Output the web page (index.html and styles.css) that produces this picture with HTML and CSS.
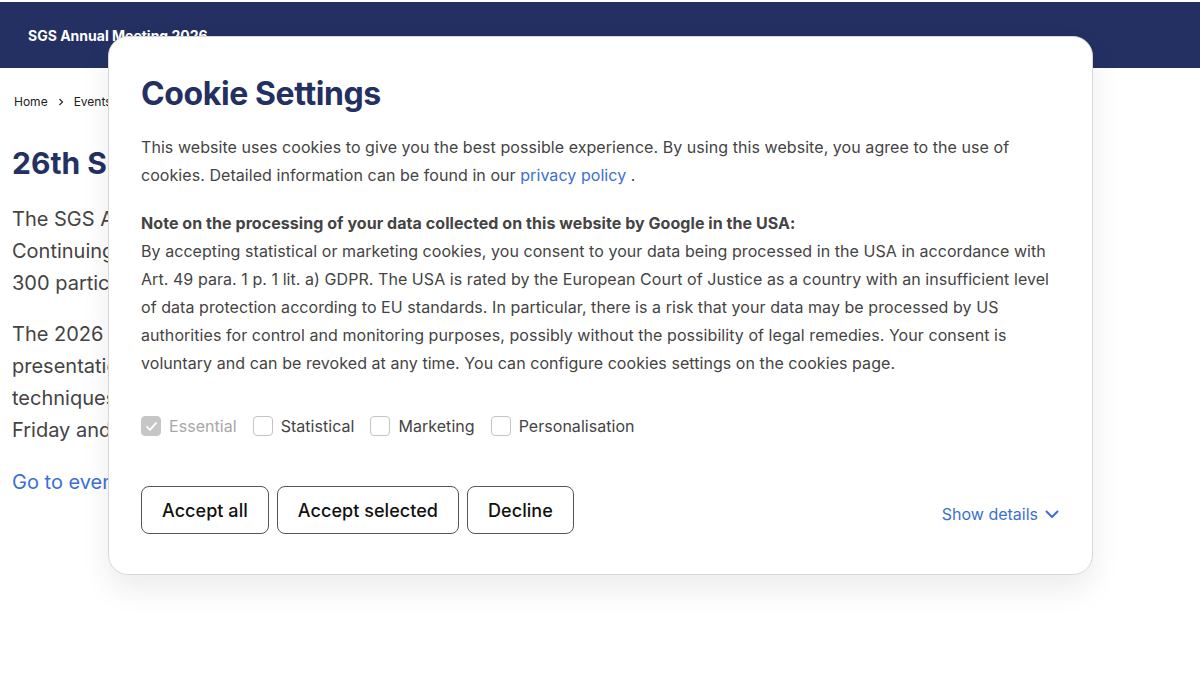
FILE: index.html
```html
<!DOCTYPE html>
<html lang="en">
<head>
    <meta charset="UTF-8">
    <meta name="viewport" content="width=device-width, initial-scale=1.0">
    <title>SGS Annual Meeting 2026</title>
    <link rel="stylesheet" href="styles.css">
</head>
<body>
    <header class="site-header">
        <a class="site-title" href="#">SGS Annual Meeting 2026</a>
    </header>

    <nav class="breadcrumb">
        <a href="#">Home</a>
        <svg class="crumb-sep" viewBox="0 0 8 8" width="8" height="8"><path d="M2.5 1l3 3-3 3" fill="none" stroke="#222" stroke-width="1.1"/></svg>
        <a href="#">Events</a>
        <svg class="crumb-sep" viewBox="0 0 8 8" width="8" height="8"><path d="M2.5 1l3 3-3 3" fill="none" stroke="#222" stroke-width="1.1"/></svg>
        <span>26th SGS Annual Meeting</span>
    </nav>

    <main class="page-content">
        <h1>26th SGS Annual Meeting</h1>
        <p>The SGS Annual Meeting is the central meeting of the society and brings together members,<br>
            Continuing education candidates and guests from all regions. Every year more than<br>
            300 participants take part in the scientific programme.</p>
        <p>The 2026 meeting offers a broad programme of keynote lectures, short<br>
            presentations, workshops and poster sessions on current methods and<br>
            techniques. The meeting takes place over two days,<br>
            Friday and Saturday, at the congress centre.</p>
        <a class="event-link" href="#">Go to event registration</a>
    </main>

    <div class="cookie-modal" role="dialog" aria-labelledby="cookieTitle">
        <h2 id="cookieTitle">Cookie Settings</h2>
        <p class="cookie-text">This website uses cookies to give you the best possible experience. By using this website, you agree to the use of cookies. Detailed information can be found in our <a href="#">privacy policy</a> .</p>
        <p class="cookie-text">
            <strong>Note on the processing of your data collected on this website by Google in the USA:</strong><br>
            By accepting statistical or marketing cookies, you consent to your data being processed in the USA in accordance with Art. 49 para. 1 p. 1 lit. a) GDPR. The USA is rated by the European Court of Justice as a country with an insufficient level of data protection according to EU standards. In particular, there is a risk that your data may be processed by US authorities for control and monitoring purposes, possibly without the possibility of legal remedies. Your consent is voluntary and can be revoked at any time. You can configure cookies settings on the cookies page.
        </p>

        <div class="cookie-options">
            <label class="option disabled">
                <span class="box checked">
                    <svg viewBox="0 0 20 20" width="15" height="15"><path d="M4 10.5l4 4 8-9" fill="none" stroke="#fff" stroke-width="2.6" stroke-linecap="round" stroke-linejoin="round"/></svg>
                </span>
                Essential
            </label>
            <label class="option"><span class="box"></span>Statistical</label>
            <label class="option"><span class="box"></span>Marketing</label>
            <label class="option"><span class="box"></span>Personalisation</label>
        </div>

        <div class="cookie-actions">
            <div class="buttons">
                <button class="cookie-btn">Accept all</button>
                <button class="cookie-btn">Accept selected</button>
                <button class="cookie-btn">Decline</button>
            </div>
            <a class="show-details" href="#">Show details
                <svg viewBox="0 0 16 16" width="16" height="16"><path d="M2.5 5.5L8 11l5.5-5.5" fill="none" stroke="currentColor" stroke-width="2" stroke-linecap="round" stroke-linejoin="round"/></svg>
            </a>
        </div>
    </div>
</body>
</html>
```

FILE: styles.css
```css
body {
    font-family: Inter, "Noto Sans", sans-serif;
    margin: 0;
    padding-top: 2px;
    background-color: #fff;
    color: #444;
}
a {
    text-decoration: none;
}
.site-header {
    height: 66px;
    background-color: #243062;
    display: flex;
    align-items: center;
    padding-left: 28px;
}
.site-title {
    color: #fff;
    font-weight: 700;
    font-size: 14px;
}
.breadcrumb {
    display: flex;
    align-items: center;
    gap: 9px;
    padding: 26px 14px 0;
    font-size: 12px;
    color: #222;
}
.breadcrumb a {
    color: #222;
}
.page-content {
    padding: 0 12px;
}
.page-content h1 {
    margin: 35px 0 21px;
    font-size: 30px;
    line-height: 38px;
    color: #243062;
}
.page-content p {
    font-size: 20px;
    line-height: 32px;
    margin: 0 0 19px;
}
.event-link {
    display: inline-block;
    margin-top: 5px;
    font-size: 20px;
    color: #3b6fd4;
}
.cookie-modal {
    position: absolute;
    left: 108px;
    top: 36px;
    width: 919px;
    padding: 32px 32px 40px;
    background: #fff;
    border: 1px solid #d8d8d8;
    border-radius: 20px;
    box-shadow: 0 14px 30px rgba(0,0,0,0.08);
}
.cookie-modal h2 {
    margin: 6px 0 20px;
    font-size: 32px;
    line-height: 38px;
    font-weight: 700;
    letter-spacing: -0.4px;
    color: #243062;
}
.cookie-text {
    margin: 0 0 20px;
    font-size: 16px;
    line-height: 28px;
    letter-spacing: 0.06px;
    color: #444;
}
.cookie-text a {
    color: #3b6fd4;
}
.cookie-text strong {
    font-weight: 700;
}
.cookie-options {
    display: flex;
    gap: 16px;
    margin-top: 39px;
}
.option {
    display: flex;
    align-items: center;
    gap: 8px;
    font-size: 16px;
    letter-spacing: 0.04px;
    color: #444;
}
.option.disabled {
    color: #a8a8a8;
}
.box {
    width: 18px;
    height: 18px;
    border: 1px solid #c4c4c4;
    border-radius: 4px;
    display: flex;
    align-items: center;
    justify-content: center;
}
.box.checked {
    background-color: #c6c6c6;
    border-color: #c6c6c6;
}
.cookie-actions {
    display: flex;
    justify-content: space-between;
    align-items: center;
    margin-top: 50px;
}
.buttons {
    display: flex;
    gap: 8px;
}
.cookie-btn {
    height: 48px;
    padding: 0 20px;
    background: #fff;
    border: 1px solid #555;
    border-radius: 8px;
    font-family: inherit;
    font-size: 18px;
    font-weight: 500;
    letter-spacing: 0.05px;
    color: #111;
    cursor: pointer;
}
.show-details {
    display: flex;
    align-items: center;
    gap: 6px;
    margin-top: 8px;
    font-size: 16px;
    color: #3b6fd4;
}
```
